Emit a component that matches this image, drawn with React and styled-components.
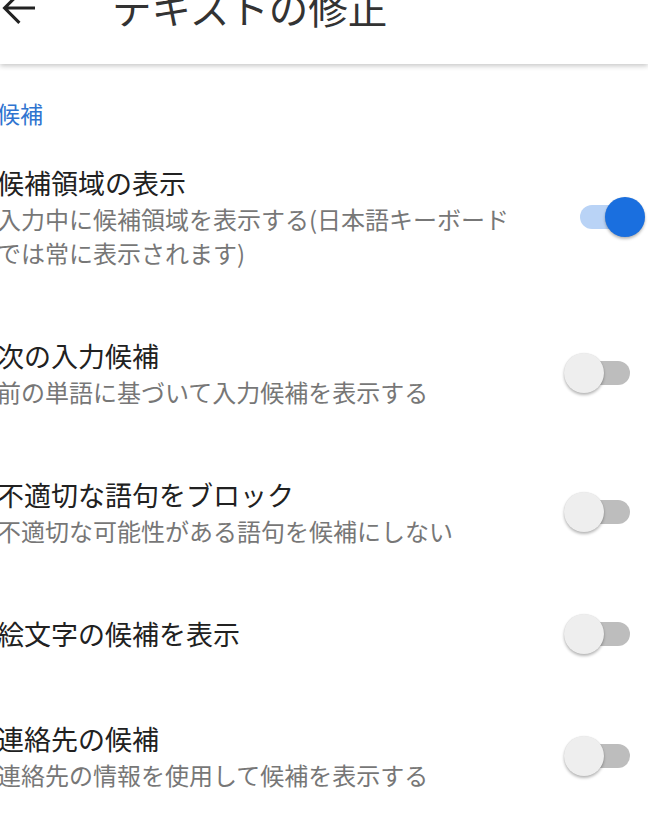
import styled, { createGlobalStyle } from "styled-components";

const GlobalStyle = createGlobalStyle`
  html, body {
    margin: 0;
    padding: 0;
    background: #ffffff;
    overflow: hidden;
  }
  body {
    font-family: "Noto Sans CJK JP", "Noto Sans", sans-serif;
    -webkit-font-smoothing: antialiased;
  }
`;

const Screen = styled.div`
  width: 648px;
  height: 814px;
  overflow: hidden;
  background: #ffffff;
`;

const Toolbar = styled.header`
  height: 112px;
  margin-top: -48px;
  display: flex;
  align-items: center;
  background: #ffffff;
  box-shadow: 0 2px 5px rgba(0, 0, 0, 0.22);
  position: relative;
  z-index: 1;

  svg {
    margin-left: -5px;
    flex-shrink: 0;
  }
`;

const Title = styled.h1`
  margin: -2px 0 0 69px;
  font-size: 39.5px;
  font-weight: 400;
  color: #333333;
  line-height: 1;
`;

const SectionLabel = styled.div`
  margin: 34px 0 0 -3px;
  height: 30px;
  line-height: 30px;
  font-size: 23px;
  color: #2f74d0;
`;

const List = styled.div`
  margin-top: 2.5px;
`;

const Row = styled.div`
  display: flex;
  align-items: center;
  padding: 33.5px 18px 33.5px 0;
`;

const Texts = styled.div`
  width: 521px;
  margin-left: -3px;
`;

const RowTitle = styled.div`
  font-size: 27px;
  line-height: 38px;
  color: #212121;
`;

const RowSummary = styled.div`
  font-size: 24px;
  line-height: 34px;
  color: #777777;
`;

const Track = styled.div`
  position: relative;
  margin-left: auto;
  width: 50px;
  height: 24px;
  border-radius: 12px;
  background: ${(p) => (p.$on ? "#b9d3f6" : "#bdbdbd")};
`;

const Thumb = styled.span`
  position: absolute;
  top: -8px;
  left: ${(p) => (p.$on ? "25px" : "-16px")};
  width: 40px;
  height: 40px;
  border-radius: 50%;
  background: ${(p) => (p.$on ? "#1a6fdf" : "#eeeeee")};
  box-shadow: 0 2px 3px rgba(0, 0, 0, 0.28), 0 0 1px rgba(0, 0, 0, 0.12);
`;

const settings = [
    {
        title: "候補領域の表示",
        summary: "入力中に候補領域を表示する(日本語キーボードでは常に表示されます)",
        on: true,
    },
    {title: "次の入力候補", summary: "前の単語に基づいて入力候補を表示する", on: false},
    {title: "不適切な語句をブロック", summary: "不適切な可能性がある語句を候補にしない", on: false},
    {title: "絵文字の候補を表示", on: false},
    {title: "連絡先の候補", summary: "連絡先の情報を使用して候補を表示する", on: false},
];

function BackArrow() {
    return (
        <svg width="48" height="48" viewBox="0 0 24 24" fill="none">
            <path
                d="M20 12H5.2 M12.2 4.6 L4.8 12 L12.2 19.4"
                stroke="#222222"
                strokeWidth="1.55"
            />
        </svg>
    );
}

function Switch({on}) {
    return (
        <Track $on={on}>
            <Thumb $on={on}/>
        </Track>
    );
}

export default function App() {
    return (
        <Screen>
            <GlobalStyle/>
            <Toolbar>
                <BackArrow/>
                <Title>テキストの修正</Title>
            </Toolbar>
            <SectionLabel>候補</SectionLabel>
            <List>
                {settings.map((s) => (
                    <Row key={s.title}>
                        <Texts>
                            <RowTitle>{s.title}</RowTitle>
                            {s.summary && <RowSummary>{s.summary}</RowSummary>}
                        </Texts>
                        <Switch on={s.on}/>
                    </Row>
                ))}
            </List>
        </Screen>
    );
}
